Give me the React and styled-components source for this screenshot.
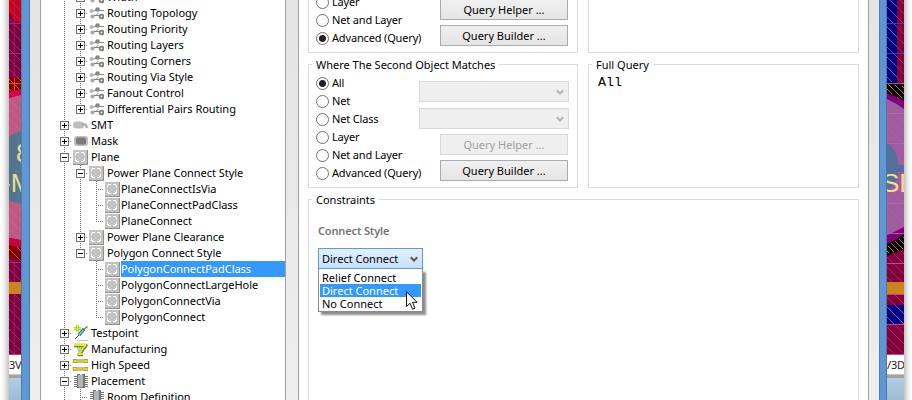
import React from "react";
import styled, { createGlobalStyle, css } from "styled-components";

const Global = createGlobalStyle`
  * { box-sizing: border-box; }
  html, body { margin: 0; padding: 0; background: #fff; overflow: hidden; }
`;

const Screen = styled.div`
  display: flex;
  width: 912px;
  height: 400px;
  overflow: hidden;
  background: #fff;
  color: #000;
  font-family: "Noto Sans", "Open Sans", sans-serif;
  font-size: 11px;
  line-height: 16px;
  white-space: nowrap;
`;

const Shade = styled.div`
  flex: none;
  width: ${(p) => p.$width}px;
  background: linear-gradient(to ${(p) => p.$toward}, #fff 0, #f4f4f4 40%, #c4c4c4 100%);
`;

const Backdrop = styled.div`
  flex: none;
  display: flex;
  flex-direction: column;
  width: ${(p) => p.$width}px;
  overflow: hidden;
`;

const Board = styled.svg`
  display: block;
  flex: none;
  height: 355px;
  width: 100%;
`;

const LayerTab = styled.div`
  flex: none;
  height: 20px;
  padding-top: 2px;
  background: #fff;
  border-bottom: 1px solid #c8c8c8;
  color: #222;
  overflow: hidden;
  letter-spacing: -0.2px;
`;

const StatusStrip = styled.div`
  flex: 1;
  border-top: 3px solid #a2a2a2;
  background: linear-gradient(#b0cfe4, #9dbcd2);
`;

const Frame = styled.div`
  flex: none;
  width: ${(p) => p.$width}px;
  background: #6096d2;
  border-left: 1px solid #4a7fba;
  border-right: 1px solid #4678ae;
`;

const Gutter = styled.div`
  flex: none;
  width: ${(p) => p.$width}px;
  background: linear-gradient(#e4e4e4, #eeeeee);
  border: 0 solid #a0a0a0;
  border-left-width: ${(p) => (p.$left ? 1 : 0)}px;
  border-right-width: ${(p) => (p.$right ? 1 : 0)}px;
`;

const Tree = styled.div`
  flex: none;
  width: 244px;
  margin-top: -11px;
  padding-left: 15px;
`;

const TreeRow = styled.div`
  display: flex;
  height: 16px;
`;

const Cell = styled.svg`
  display: block;
  flex: none;
  width: 16px;
  height: 16px;
`;

const TreeLabel = styled.div`
  flex: 1;
  margin-left: ${(p) => (p.$deep ? 1 : 2)}px;
  padding-left: ${(p) => (p.$deep ? 0 : 1)}px;
  letter-spacing: -0.03px;
  color: ${(p) => (p.$selected ? "#fff" : "#000")};
  background: ${(p) => (p.$selected ? "#3399ff" : "transparent")};
`;

const Main = styled.div`
  flex: none;
  width: 569px;
  padding: 0 9px;
  display: grid;
  grid-template-columns: 270px 271px;
  grid-template-rows: 53px 124px 210px;
  gap: 11px 10px;
`;

const Group = styled.section`
  border: 1px solid #dcdcdc;
  ${(p) => p.$clipped && css`border-top: 0; overflow: hidden;`}
  ${(p) => p.$wide && css`grid-column: 1 / 3;`}
  min-width: 0;
  display: flex;
  flex-direction: column;
`;

const Legend = styled.div`
  flex: none;
  align-self: flex-start;
  height: 16px;
  margin: -8px 0 0 3px;
  padding: 0 4px;
  background: #fff;
`;

const Matcher = styled.div`
  flex: 1;
  min-height: 0;
  display: flex;
  align-items: flex-end;
`;

const Radios = styled.div`
  flex: 1;
  min-width: 0;
  padding: 0 0 5px 7px;
  letter-spacing: -0.16px;
`;

const RadioRow = styled.label`
  display: flex;
  align-items: center;
  gap: 3px;
  height: 18px;
`;

const Dot = styled.span`
  flex: none;
  width: 13px;
  height: 13px;
  border: 1px solid #707070;
  border-radius: 50%;
  background: ${(p) => (p.$on ? "radial-gradient(circle, #222 0 3px, #fff 4px)" : "#fff")};
`;

const Controls = styled.div`
  flex: none;
  display: flex;
  flex-direction: column;
  align-items: flex-end;
  gap: 5px;
  margin-left: -20px;
  padding: 0 8px 6px 0;
`;

const Combo = styled.div`
  display: flex;
  justify-content: flex-end;
  align-items: center;
  width: 150px;
  height: 21px;
  padding: 1px 4px 0 0;
  border: 1px solid #d9d9d9;
  background: #efefef;
  & + & { margin-top: 1px; }
`;

const Button = styled.button`
  width: 128px;
  height: 21px;
  margin: 0 1px 0 0;
  padding: 1px 0 0;
  font: inherit;
  line-height: 16px;
  letter-spacing: 0;
  border: 1px solid ${(p) => (p.disabled ? "#d9d9d9" : "#acacac")};
  background: ${(p) => (p.disabled ? "#efefef" : "linear-gradient(#f0f0f0, #e5e5e5)")};
  color: ${(p) => (p.disabled ? "#a0a0a0" : "#000")};
`;

const Query = styled.div`
  padding: 2px 0 0 9px;
  font: 13.33px/16px "Liberation Mono", monospace;
`;

const Caption = styled.div`
  margin: 15px 0 0 9px;
  color: #747474;
  font-weight: 600;
  letter-spacing: -0.15px;
`;

const Picker = styled.div`
  position: relative;
  width: 105px;
  margin: 9px 0 0 9px;
`;

const PickerValue = styled.div`
  display: flex;
  justify-content: space-between;
  align-items: center;
  height: 21px;
  padding: 0 4px 0 3px;
  border: 1px solid #569de5;
  background: linear-gradient(#e4f0fc, #c5e0fa);
  svg { margin-top: 2px; }
`;

const Options = styled.div`
  position: absolute;
  top: 21px;
  left: 0;
  width: 105px;
  height: 43px;
  padding: 2px 1px;
  background: #fff;
  border: 1px solid #8a8a8a;
  border-top: 0;
  box-shadow: 3px 3px 2px rgba(0, 0, 0, 0.45);
`;

const Option = styled.div`
  height: 13px;
  padding-left: 2px;
  line-height: 13px;
  color: ${(p) => (p.$active ? "#fff" : "#000")};
  background: ${(p) => (p.$active ? "#3399ff" : "transparent")};
`;

const Pointer = styled.svg`
  position: absolute;
  left: 88px;
  top: 43px;
  width: 13px;
  height: 20px;
`;

const Chevron = ({ color }) => (
  <svg width="8" height="7" viewBox="0 0 8 7">
    <path d="M0.8 1.2 L4 4.6 L7.2 1.2" fill="none" stroke={color} strokeWidth="2" />
  </svg>
);

const dotted = { stroke: "#707070", strokeDasharray: "1 1", shapeRendering: "crispEdges" };

/* kind: line | tee | plus | minus | blank; last closes the branch */
const Guide = ({ kind, last }) => {
  const box = kind === "plus" || kind === "minus";
  return (
    <Cell viewBox="0 0 16 16">
      {kind !== "blank" && <line x1="8.5" y1="0" x2="8.5" y2={last ? 8 : 16} {...dotted} />}
      {kind !== "blank" && kind !== "line" && <line x1="8" y1="8.5" x2="16" y2="8.5" {...dotted} />}
      {box && (
        <g shapeRendering="crispEdges" stroke="#6c6c6c">
          <rect x="4.5" y="4.5" width="8" height="8" fill="#fff" />
          <path d={kind === "plus" ? "M6 8.5h5M8.5 6v5" : "M6 8.5h5"} stroke="#000" />
        </g>
      )}
    </Cell>
  );
};

const icons = {
  route: (
    <g>
      <path d="M8 5.5H16M4 6.5L9 5M5 10.500H13M8 10.500L10.500 8" stroke="#858585" fill="none" />
      <circle cx="3.600" cy="6" r="2.100" fill="#b8b8b8" />
      <circle cx="9.500" cy="4.500" r="2.300" fill="#868686" />
      <circle cx="4.500" cy="11.500" r="2.100" fill="#a8a8a8" />
      <circle cx="13.500" cy="11.500" r="1.900" fill="#e4e4e4" stroke="#7c7c7c" strokeWidth="1.700" />
    </g>
  ),
  smt: (
    <g>
      <rect x="1" y="4.500" width="11" height="7" rx="3.500" fill="#bdbdbd" />
      <path d="M10 7.500h3.500l1.700 3.500" stroke="#a6a6a6" strokeWidth="2" fill="none" />
    </g>
  ),
  mask: (
    <g>
      <rect x="2" y="3" width="14" height="10" rx="3" fill="#bcbcbc" />
      <rect x="4" y="4.5" width="10" height="7" rx="2" fill="#7c7c7c" />
    </g>
  ),
  plane: (
    <g shapeRendering="crispEdges">
      <rect x="1" y="1" width="15" height="15" fill="#909090" />
      <rect x="1" y="1" width="14" height="14" fill="#c3c3c3" />
      <path d="M4 3h3v1H5v1H4v2H3V4h1zM9 3h3v1h1v3h-1V5h-1V4H9zM3 9h1v2h1v1h2v1H4v-1H3zM12 9h1v3h-1v1H9v-1h2v-1h1z" fill="#fff" />
    </g>
  ),
  probe: (
    <g fill="none">
      <path d="M2 3.500h7M5.500 0v7" stroke="#58a800" strokeWidth="2" />
      <path d="M2 3.500h7M5.500 0v7" stroke="#e8f400" strokeWidth="1.100" />
      <path d="M3 14L8 9" stroke="#444" />
      <path d="M7 10L12 4" stroke="#555" strokeWidth="3.500" />
      <path d="M7 10L12 4" stroke="#42d9e6" strokeWidth="1.800" />
      <path d="M11 5L15.500 1.500" stroke="#666" strokeWidth="1.300" />
      <path d="M5 15.500h11" stroke="#c0c0c0" />
    </g>
  ),
  factory: (
    <g fill="none" strokeLinejoin="round">
      <path d="M2 4.500H14L7 13.500H11" stroke="#777" strokeWidth="3.600" />
      <path d="M2 4H13.500L6.500 13H11" stroke="#f1e900" strokeWidth="2" />
      <path d="M5 6.500h5l-3 4z" fill="#a4e8a4" stroke="#50c050" strokeDasharray="1 1" />
    </g>
  ),
  speed: (
    <g fill="none">
      <path d="M2 4H15M2 12H15" stroke="#777" strokeWidth="3" />
      <path d="M2.500 2v4M14.500 2v4M2.500 10v4M14.500 10v4" stroke="#777" strokeWidth="3.400" />
      <path d="M2 4H15M2 12H15" stroke="#f1e900" strokeWidth="1.600" />
      <path d="M2.500 2.500v3M14.500 2.500v3M2.500 10.500v3M14.500 10.500v3" stroke="#f1e900" strokeWidth="2.200" />
    </g>
  ),
  chip: (
    <g shapeRendering="crispEdges">
      <path d="M2 3.500h14M2 5.500h14M2 7.500h14M2 9.500h14M2 11.500h14M2 13.500h14" stroke="#777" />
      <rect x="5" y="1" width="8" height="14" fill="#777" />
      <rect x="6" y="2" width="5" height="12" fill="#b4b4b4" />
      <rect x="8" y="1" width="2" height="1" fill="#fff" />
    </g>
  ),
};

const rows = [
  { text: "Width", icon: "route", guides: ["line", "plus"] },
  { text: "Routing Topology", icon: "route", guides: ["line", "plus"] },
  { text: "Routing Priority", icon: "route", guides: ["line", "plus"] },
  { text: "Routing Layers", icon: "route", guides: ["line", "plus"] },
  { text: "Routing Corners", icon: "route", guides: ["line", "plus"] },
  { text: "Routing Via Style", icon: "route", guides: ["line", "plus"] },
  { text: "Fanout Control", icon: "route", guides: ["line", "plus"] },
  { text: "Differential Pairs Routing", icon: "route", guides: ["line", "plus"], last: true },
  { text: "SMT", icon: "smt", guides: ["plus"] },
  { text: "Mask", icon: "mask", guides: ["plus"] },
  { text: "Plane", icon: "plane", guides: ["minus"] },
  { text: "Power Plane Connect Style", icon: "plane", guides: ["line", "minus"] },
  { text: "PlaneConnectIsVia", icon: "plane", guides: ["line", "line", "tee"] },
  { text: "PlaneConnectPadClass", icon: "plane", guides: ["line", "line", "tee"] },
  { text: "PlaneConnect", icon: "plane", guides: ["line", "line", "tee"], last: true },
  { text: "Power Plane Clearance", icon: "plane", guides: ["line", "plus"] },
  { text: "Polygon Connect Style", icon: "plane", guides: ["line", "minus"], last: true },
  { text: "PolygonConnectPadClass", icon: "plane", guides: ["line", "blank", "tee"], selected: true },
  { text: "PolygonConnectLargeHole", icon: "plane", guides: ["line", "blank", "tee"] },
  { text: "PolygonConnectVia", icon: "plane", guides: ["line", "blank", "tee"] },
  { text: "PolygonConnect", icon: "plane", guides: ["line", "blank", "tee"], last: true },
  { text: "Testpoint", icon: "probe", guides: ["plus"] },
  { text: "Manufacturing", icon: "factory", guides: ["plus"] },
  { text: "High Speed", icon: "speed", guides: ["plus"] },
  { text: "Placement", icon: "chip", guides: ["minus"] },
  { text: "Room Definition", icon: "chip", guides: ["line", "tee"] },
];

const Hatch = ({ id, color }) => (
  <pattern id={id} width="10" height="10" patternUnits="userSpaceOnUse">
    <path d="M0 0L10 10" stroke={color} strokeWidth="0.8" />
  </pattern>
);

const LeftBoard = () => (
  <Board viewBox="9 0 12 355" preserveAspectRatio="none">
    <defs>
      <Hatch id="hl" color="#b8305e" />
      <Hatch id="hp" color="#c8688c" />
      <Hatch id="ho" color="#ff5a1e" />
    </defs>
    <rect x="9" width="12" height="355" fill="#7e0043" />
    <path d="M9 0h12v24Q13 21 9 12z" fill="#c8001e" />
    <path d="M9 78H21V91H9zM9 245H21V258H9z" fill="#820000" />
    <path d="M9 0H21V355H9z" fill="url(#hl)" />
    <path d="M9 78H21V91H9zM9 245H21V258H9z" fill="url(#ho)" />
    <path d="M9 92L21 89V96L9 98z" fill="#d6004a" />
    <path d="M9 98L21 95V240L9 238z" fill="#c0587f" />
    <path d="M9 98L21 95V240L9 238z" fill="url(#hp)" />
    <path d="M9 136L21 131V204L9 201z" fill="#54758c" />
    <path d="M9 238L21 240V248L9 245z" fill="#c8003c" />
    <path d="M9 23.500h12M9 53.500h12M9 262.500h12" stroke="#b0307a" strokeWidth="0.800" />
    <path d="M14.500 0V78M14.500 260V355" stroke="#a02864" strokeWidth="0.700" />
    <path d="M9 83.500h12M14.500 78v13" stroke="#ff5a1e" strokeWidth="0.800" />
    <rect x="9" y="282" width="12" height="12" fill="#cc821e" />
    <path d="M9 354.500h12" stroke="#d0306a" />
    <g fill="#f0dc8c" fontFamily="Liberation Sans, sans-serif" fontSize="26">
      <text x="16" y="162">8</text>
      <text x="2" y="192">-M</text>
    </g>
  </Board>
);

const RightBoard = () => (
  <Board viewBox="887 0 17 355" preserveAspectRatio="none">
    <defs>
      <Hatch id="hr" color="#b060a8" />
      <Hatch id="hc" color="#c02858" />
      <pattern id="hb" width="6" height="6" patternUnits="userSpaceOnUse">
        <path d="M0 0L6 6" stroke="#ff8a28" strokeWidth="0.800" />
      </pattern>
    </defs>
    <rect x="887" width="17" height="355" fill="#80003e" />
    <path d="M887 0H904V355H887z" fill="url(#hc)" />
    <rect x="887" width="10" height="84" fill="#000080" />
    <path d="M887 82L904 84V101Q895 95 887 94z" fill="#000" />
    <path d="M887 94Q897 97 904 102V112H887z" fill="#800080" />
    <path d="M887 99Q896 103 904 109V228Q896 232 887 236z" fill="#a05c9c" />
    <path d="M887 0H897V82H887zM887 110H904V226H887z" fill="url(#hr)" />
    <path d="M887 142Q899 152 898 165H904V172H898Q898 185 887 190z" fill="#54709a" />
    <path d="M887 235Q897 231 904 227V234Q896 240 887 244z" fill="#800080" />
    <path d="M887 244Q897 239 904 234V250Q896 251 887 256z" fill="#000" />
    <path d="M887 84L904 86V99L887 92zM887 246L904 236V249L887 254z" fill="url(#hb)" />
    <path d="M887 23.500h17M887 53.500h17" stroke="#4a40d0" strokeWidth="0.800" />
    <path d="M887 83.500h17M887 113.500h17M887 143.500h17M887 203.500h17M887 233.500h17M887 263.500h17" stroke="#c060b0" strokeWidth="0.800" />
    <rect x="887" y="282" width="17" height="12" fill="#cc821e" />
    <rect x="887" y="305" width="17" height="19" fill="#000080" />
    <rect x="887" y="305" width="17" height="19" fill="url(#hr)" />
    <path d="M887 294.500h17M887 324.500h17M887 354.500h17" stroke="#d0407a" />
    <text x="882" y="192" fill="#f4dc8c" fontFamily="Liberation Sans, sans-serif" fontSize="26">SE</text>
  </Board>
);

const RadioGroup = ({ options, value }) => (
  <Radios>
    {options.map((o) => (
      <RadioRow key={o}>
        <Dot $on={o === value} />
        {o}
      </RadioRow>
    ))}
  </Radios>
);

export default function App() {
  return (
    <>
      <Global />
      <Screen>
        <Shade $width={9} $toward="right" />
        <Backdrop $width={12}>
          <LeftBoard />
          <LayerTab>3V</LayerTab>
          <StatusStrip />
        </Backdrop>
        <Frame $width={9} />
        <Gutter $width={11} $right />
        <Tree>
          {rows.map((r) => (
            <TreeRow key={r.text}>
              {r.guides.map((kind, i) => (
                <Guide key={i} kind={kind} last={r.last && i === r.guides.length - 1} />
              ))}
              <Cell viewBox="0 0 16 16">{icons[r.icon]}</Cell>
              <TreeLabel $deep={r.guides.length === 3} $selected={r.selected}>{r.text}</TreeLabel>
            </TreeRow>
          ))}
        </Tree>
        <Gutter $width={14} $left $right />
        <Main>
          <Group $clipped>
            <Matcher>
              <RadioGroup options={["Layer", "Net and Layer", "Advanced (Query)"]} value="Advanced (Query)" />
              <Controls>
                <Button>Query Helper ...</Button>
                <Button>Query Builder ...</Button>
              </Controls>
            </Matcher>
          </Group>
          <Group $clipped />
          <Group>
            <Legend>Where The Second Object Matches</Legend>
            <Matcher>
              <RadioGroup
                options={["All", "Net", "Net Class", "Layer", "Net and Layer", "Advanced (Query)"]}
                value="All"
              />
              <Controls>
                <Combo><Chevron color="#b4b4b4" /></Combo>
                <Combo><Chevron color="#b4b4b4" /></Combo>
                <Button disabled>Query Helper ...</Button>
                <Button>Query Builder ...</Button>
              </Controls>
            </Matcher>
          </Group>
          <Group>
            <Legend>Full Query</Legend>
            <Query>All</Query>
          </Group>
          <Group $wide>
            <Legend>Constraints</Legend>
            <Caption>Connect Style</Caption>
            <Picker>
              <PickerValue>
                Direct Connect
                <Chevron color="#555" />
              </PickerValue>
              <Options>
                <Option>Relief Connect</Option>
                <Option $active>Direct Connect</Option>
                <Option>No Connect</Option>
              </Options>
              <Pointer viewBox="0 0 13 20">
                <path d="M0.500 0.800V15.500L4 12.200L6.500 18.200L9 17.200L6.500 11.300H11.200z" fill="#fff" stroke="#111" />
              </Pointer>
            </Picker>
          </Group>
        </Main>
        <Gutter $width={11} $left />
        <Frame $width={8} />
        <Backdrop $width={17}>
          <RightBoard />
          <LayerTab>/3D</LayerTab>
          <StatusStrip />
        </Backdrop>
        <Shade $width={8} $toward="left" />
      </Screen>
    </>
  );
}
